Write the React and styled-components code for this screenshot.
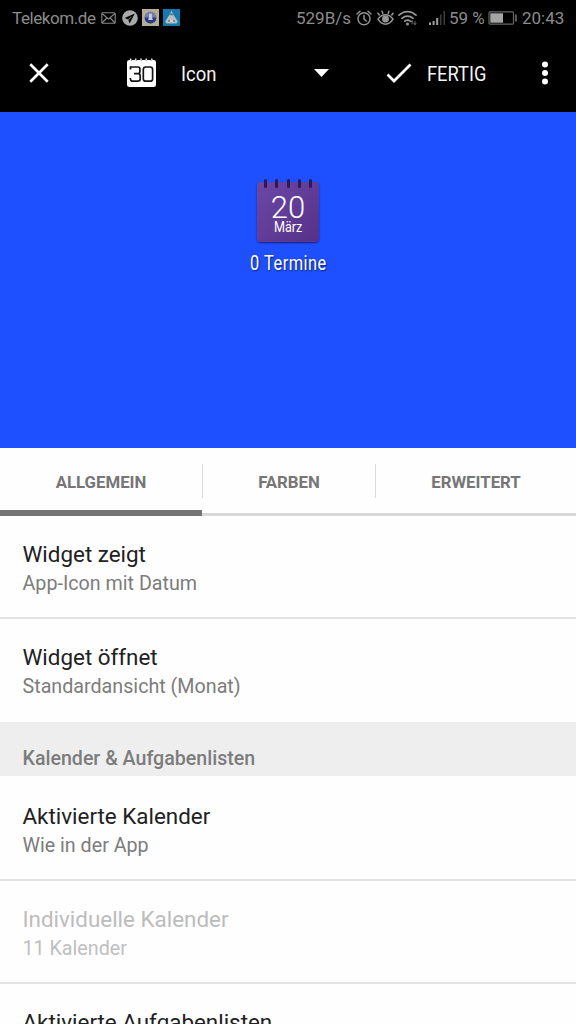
import React from "react";
import styled, { createGlobalStyle } from "styled-components";

const GlobalStyle = createGlobalStyle`
  * { box-sizing: border-box; }
  body { margin: 0; background: #fff; font-family: Roboto, "Liberation Sans", sans-serif; overflow: hidden; }
`;

const Screen = styled.main`
  display: flex;
  flex-direction: column;
  width: 576px;
  height: 1024px;
  overflow: hidden;
  background: #fefefe;
`;

const Line = styled.span`
  display: block;
  flex: none;
  white-space: nowrap;
  font-size: ${(p) => p.$size}px;
  line-height: ${(p) => p.$line || 24}px;
  letter-spacing: ${(p) => p.$track || 0}px;
`;

/* Narrow lettering: glyphs are squeezed inside a box of the final width. */
const Condensed = styled(Line)`
  width: ${(p) => p.$width}px;
  transform: scaleX(${(p) => p.$squeeze});
  transform-origin: left center;
`;

const StatusBar = styled.header`
  display: flex;
  align-items: center;
  flex: none;
  height: 35px;
  padding: 0 11px 0 12px;
  background: #000;
  color: #8c8c8c;
`;

const StatusIcon = styled.svg`
  display: block;
  flex: none;
  margin-left: ${(p) => p.$gap || 0}px;
`;

const StatusRight = styled.div`
  display: flex;
  align-items: center;
  margin-left: auto;
`;

const StatusText = styled(Line)`
  width: ${(p) => p.$width}px;
  margin-left: ${(p) => p.$gap || 0}px;
`;

const Toolbar = styled.div`
  display: flex;
  align-items: center;
  flex: none;
  height: 77px;
  padding-bottom: 1px;
  background: #000;
  color: #f4f4f4;
`;

const ToolIcon = styled.svg`
  display: block;
  flex: none;
  margin-left: ${(p) => p.$gap}px;
`;

const ToolText = styled.div`
  margin-left: ${(p) => p.$gap}px;
  padding-top: 1px;
  flex: none;
`;

const Preview = styled.section`
  display: flex;
  flex-direction: column;
  align-items: center;
  flex: none;
  height: 336px;
  padding-top: 66px;
  background: #1f50ff;
  color: #fff;
`;

const Caption = styled.div`
  margin-top: 10px;
  text-shadow: 1px 1px 2px rgba(0, 0, 0, 0.6);
`;

const Tabs = styled.nav`
  display: flex;
  flex: none;
  height: 68px;
  box-shadow: inset 0 -3px 0 #d8d8d8;
`;

const Tab = styled.div`
  display: flex;
  align-items: center;
  justify-content: center;
  flex: none;
  width: ${(p) => p.$width}px;
  padding-top: 6px;
  border-bottom: ${(p) => (p.$active ? "6px solid #747474" : "6px solid transparent")};
  color: #767676;
  font-weight: 700;
`;

const TabDivider = styled.div`
  flex: none;
  width: 1px;
  height: 34px;
  margin-top: 16px;
  background: #dcdcdc;
`;

const Row = styled.div`
  flex: none;
  height: ${(p) => p.$height}px;
  padding: ${(p) => p.$top}px 0 0 22.5px;
  border-bottom: ${(p) => (p.$last ? "none" : "2px solid #e2e2e2")};
  color: ${(p) => (p.$disabled ? "#bcbcbc" : "#212121")};
`;

const Title = styled(Line)``;

const Subtitle = styled(Line)`
  margin-top: 3px;
  color: ${(p) => (p.$disabled ? "#bfbfbf" : "#7c7c7c")};
`;

const SectionHeader = styled.div`
  flex: none;
  height: 54px;
  padding: 25px 0 0 22.5px;
  background: #eeeeee;
  color: #7c7c7c;
  font-weight: 500;
`;

function Mail() {
  return (
    <StatusIcon $gap={5} width="15" height="12" viewBox="0 0 15 12" fill="none" stroke="#888" strokeWidth="1.1">
      <rect x=".8" y=".8" width="13.4" height="10.4" rx="1" />
      <path d="M1 1.5 7.5 7 14 1.5M1 11l4.8-5M14 11 9.2 6" />
    </StatusIcon>
  );
}

function Telegram() {
  return (
    <StatusIcon $gap={6} width="16" height="16" viewBox="0 0 16 16">
      <circle cx="8" cy="8" r="7.8" fill="#a9a9a9" />
      <path d="M12.8 3.4 2.6 8l3.6 1.4 1.4 4z" fill="#050505" />
      <path d="m6.3 9.3 3.9-3.2-3.4 4z" fill="#a9a9a9" />
    </StatusIcon>
  );
}

function CrestBadge() {
  return (
    <StatusIcon $gap={4} width="17" height="17" viewBox="0 0 17 17">
      <rect width="17" height="17" fill="#b5ad98" />
      <circle cx="8.5" cy="8.5" r="6" fill="#7380a5" />
      <path d="M2.6 8.6h11.8a5.9 5.9 0 0 1-11.8 0z" fill="#263c86" />
      <path d="M7 4.8h3v3l.8 3.2H6.2L7 7.5z" fill="#c5c9d4" />
    </StatusIcon>
  );
}

function TentBadge() {
  return (
    <StatusIcon $gap={4} width="17" height="17" viewBox="0 0 17 17">
      <rect width="17" height="17" fill="#1679ad" />
      <path d="M8.5 1.4 10 5l4.8 7.4-1.3 2H3.4l-1.2-2L7 5z" fill="#b5bec2" />
      <path d="M7.2 4.6h2.6v1.6H7.2zM5.2 11.4l1.6-.6v1.4l-1.6.8zM11.8 11.4l-1.6-.6v1.4l1.6.8z" fill="#596e82" />
      <path d="M7.2 10.7h2.6v2.4H7.2z" fill="#d6d3cb" />
    </StatusIcon>
  );
}

function Alarm() {
  return (
    <StatusIcon $gap={5} width="16" height="16" viewBox="0 0 16 16" fill="none" stroke="#929292" strokeWidth="1.5" strokeLinecap="round">
      <circle cx="8" cy="8.8" r="6" />
      <path d="M8 5.4V9l2.3 2M1 4l3-2.7M15 4l-3-2.7" />
    </StatusIcon>
  );
}

function Eye() {
  return (
    <StatusIcon $gap={5} width="17" height="16" viewBox="0 0 17 16" fill="none" stroke="#969696" strokeWidth="1.5" strokeLinecap="round">
      <path d="M1 9.2c4-6 11-6 15 0-4 6.6-11 6.6-15 0zM2.3 5 1 3.2M5.8 3.3 5 1.2M11.2 3.3l.8-2.1M14.7 5 16 3.2" />
      <circle cx="8.5" cy="9" r="2.7" fill="#969696" />
    </StatusIcon>
  );
}

function Wifi() {
  return (
    <StatusIcon $gap={4} width="19" height="16" viewBox="0 0 19 16" fill="none" stroke="#969696" strokeWidth="1.7" strokeLinecap="round">
      <path d="M1 5.2c5-4.8 12-4.8 17 0M3.9 8.3c3.3-3 7.9-3 11.2 0M6.7 11.2c1.7-1.4 3.9-1.4 5.6 0" />
      <circle cx="9.5" cy="14" r="1.5" fill="#969696" stroke="none" />
      <path d="M14 14v-3m-1.1 1 1.1-1.2 1.1 1.2M17 11.5v3m-1-1 1 1 1-1" strokeWidth=".7" />
    </StatusIcon>
  );
}

function Signal() {
  return (
    <StatusIcon $gap={12} width="17" height="16" viewBox="0 0 17 16">
      <path d="M0 12.5h2V15H0zM3.6 11h2v4h-2zM7.2 8h2v7h-2z" fill="#a0a0a0" />
      <path d="M11 4.5h1.5V15H11zM14.5 1H16v14h-1.5z" fill="#3c3c3c" />
    </StatusIcon>
  );
}

function Battery() {
  return (
    <StatusIcon $gap={4} width="30" height="14" viewBox="0 0 30 14">
      <rect x="1" y=".8" width="24.5" height="12.4" rx="1" fill="none" stroke="#656565" strokeWidth="1.2" />
      <rect x="2.3" y="2.3" width="12.7" height="9.4" fill="#a5a5a5" />
      <path d="M27.2 3.5h1.5v7h-1.5z" fill="#777" />
    </StatusIcon>
  );
}

function CalendarGlyph() {
  return (
    <ToolIcon $gap={77} width="31" height="30" viewBox="0 0 31 30">
      <path d="M1 4.3Q1 2 3.2 2h1.2a1.3 1.3 0 0 0 2 0h3a1.3 1.3 0 0 0 2 0h3a1.3 1.3 0 0 0 2 0h3a1.3 1.3 0 0 0 2 0h3a1.3 1.3 0 0 0 2 0h1.4Q30 2 30 4.3V26.5Q30 29 27.5 29h-24Q1 29 1 26.5z" fill="#fff" />
      <path d="M4.7.5v2M9.8.5v2M15 .5v2M20.2.5v2M25.8.5v2" stroke="#fff" strokeWidth="1.3" />
      <path d="M4.5 11.5V9h7.4q2 0 2 2v2.4q0 2.2-2.2 2.2H8h3.9q2.3 0 2.3 2.3v2.9q0 2.4-2.4 2.4H6.7q-2.3 0-2.3-2.4v-.9" fill="none" stroke="#151515" strokeWidth="1.7" />
      <rect x="17.3" y="9" width="9.3" height="14.2" rx="2.5" fill="none" stroke="#151515" strokeWidth="1.7" />
    </ToolIcon>
  );
}

const WidgetIcon = styled.div`
  position: relative;
  display: flex;
  flex-direction: column;
  align-items: center;
  flex: none;
  width: 62px;
  height: 60px;
  margin-top: 4px;
  padding-top: 11px;
  border-radius: 4px;
  background: linear-gradient(135deg, #6b47a7 0%, #613c98 50%, #553187 100%);
  box-shadow: 0 1px 2px rgba(15, 15, 80, 0.75);
`;

const Rings = styled.div`
  position: absolute;
  top: -3px;
  left: 7px;
  right: 7px;
  display: flex;
  justify-content: space-between;
`;

const Ring = styled.span`
  width: 3px;
  height: 9px;
  border-radius: 1.5px;
  background: #2b1857;
`;

const DayNumber = styled(Line)`
  font-weight: 300;
`;

const items = [
  { title: "Widget zeigt", sub: "App-Icon mit Datum", height: 103, top: 25 },
  { title: "Widget öffnet", sub: "Standardansicht (Monat)", height: 103, top: 25, last: true },
];
const calendarItems = [
  { title: "Aktivierte Kalender", sub: "Wie in der App", height: 105, top: 27 },
  { title: "Individuelle Kalender", sub: "11 Kalender", height: 103, top: 25, disabled: true },
  { title: "Aktivierte Aufgabenlisten", sub: "", height: 103, top: 25 },
];

function SettingRow({ item }) {
  return (
    <Row $height={item.height} $top={item.top} $last={item.last} $disabled={item.disabled}>
      <Title $size={22.4} $line={26}>{item.title}</Title>
      {item.sub && <Subtitle $size={19.7} $line={27} $disabled={item.disabled}>{item.sub}</Subtitle>}
    </Row>
  );
}

export default function App() {
  return (
    <Screen>
      <GlobalStyle />
      <StatusBar>
        <StatusText $size={17} $track={-0.43} $width={84}>Telekom.de</StatusText>
        <Mail />
        <Telegram />
        <CrestBadge />
        <TentBadge />
        <StatusRight>
          <StatusText $size={17} $width={55}>529B/s</StatusText>
          <Alarm />
          <Eye />
          <Wifi />
          <Signal />
          <StatusText $size={17} $width={35} $gap={3}>59 %</StatusText>
          <Battery />
          <StatusText $size={17} $width={43} $gap={4}>20:43</StatusText>
        </StatusRight>
      </StatusBar>
      <Toolbar>
        <ToolIcon $gap={29} width="20" height="20" viewBox="0 0 20 20" fill="none" stroke="#fff" strokeWidth="2.7">
          <path d="m1.3 1.3 17.4 17.4M18.7 1.3 1.3 18.7" />
        </ToolIcon>
        <CalendarGlyph />
        <ToolText $gap={24}>
          <Condensed $size={21} $width={36} $squeeze={0.88}>Icon</Condensed>
        </ToolText>
        <ToolIcon $gap={97} width="15" height="8" viewBox="0 0 15 8">
          <path d="M0 0h15L7.5 8z" fill="#fff" />
        </ToolIcon>
        <ToolIcon $gap={57} width="26" height="20" viewBox="0 0 26 20" fill="none" stroke="#fff" strokeWidth="2.7">
          <path d="m1.5 11.5 6.5 6.5L24.5 1.5" />
        </ToolIcon>
        <ToolText $gap={15}>
          <Condensed $size={21} $width={60} $squeeze={0.87}>FERTIG</Condensed>
        </ToolText>
        <ToolIcon $gap={54} width="8" height="24" viewBox="0 0 8 24" fill="#fff">
          <circle cx="4" cy="3.5" r="3" />
          <circle cx="4" cy="12" r="3" />
          <circle cx="4" cy="20.5" r="3" />
        </ToolIcon>
      </Toolbar>
      <Preview>
        <WidgetIcon>
          <Rings><Ring /><Ring /><Ring /><Ring /><Ring /></Rings>
          <DayNumber $size={31} $line={30}>20</DayNumber>
          <Condensed $size={14} $line={9} $width={28} $squeeze={0.9}>März</Condensed>
        </WidgetIcon>
        <Caption>
          <Condensed $size={19.5} $width={77} $squeeze={0.84} $track={0.6}>0 Termine</Condensed>
        </Caption>
      </Preview>
      <Tabs>
        <Tab $width={202} $active><Line $size={16.8}>ALLGEMEIN</Line></Tab>
        <TabDivider />
        <Tab $width={172}><Line $size={16.8}>FARBEN</Line></Tab>
        <TabDivider />
        <Tab $width={200}><Line $size={16.8}>ERWEITERT</Line></Tab>
      </Tabs>
      {items.map((item) => <SettingRow key={item.title} item={item} />)}
      <SectionHeader><Line $size={19.6}>Kalender &amp; Aufgabenlisten</Line></SectionHeader>
      {calendarItems.map((item) => <SettingRow key={item.title} item={item} />)}
    </Screen>
  );
}
